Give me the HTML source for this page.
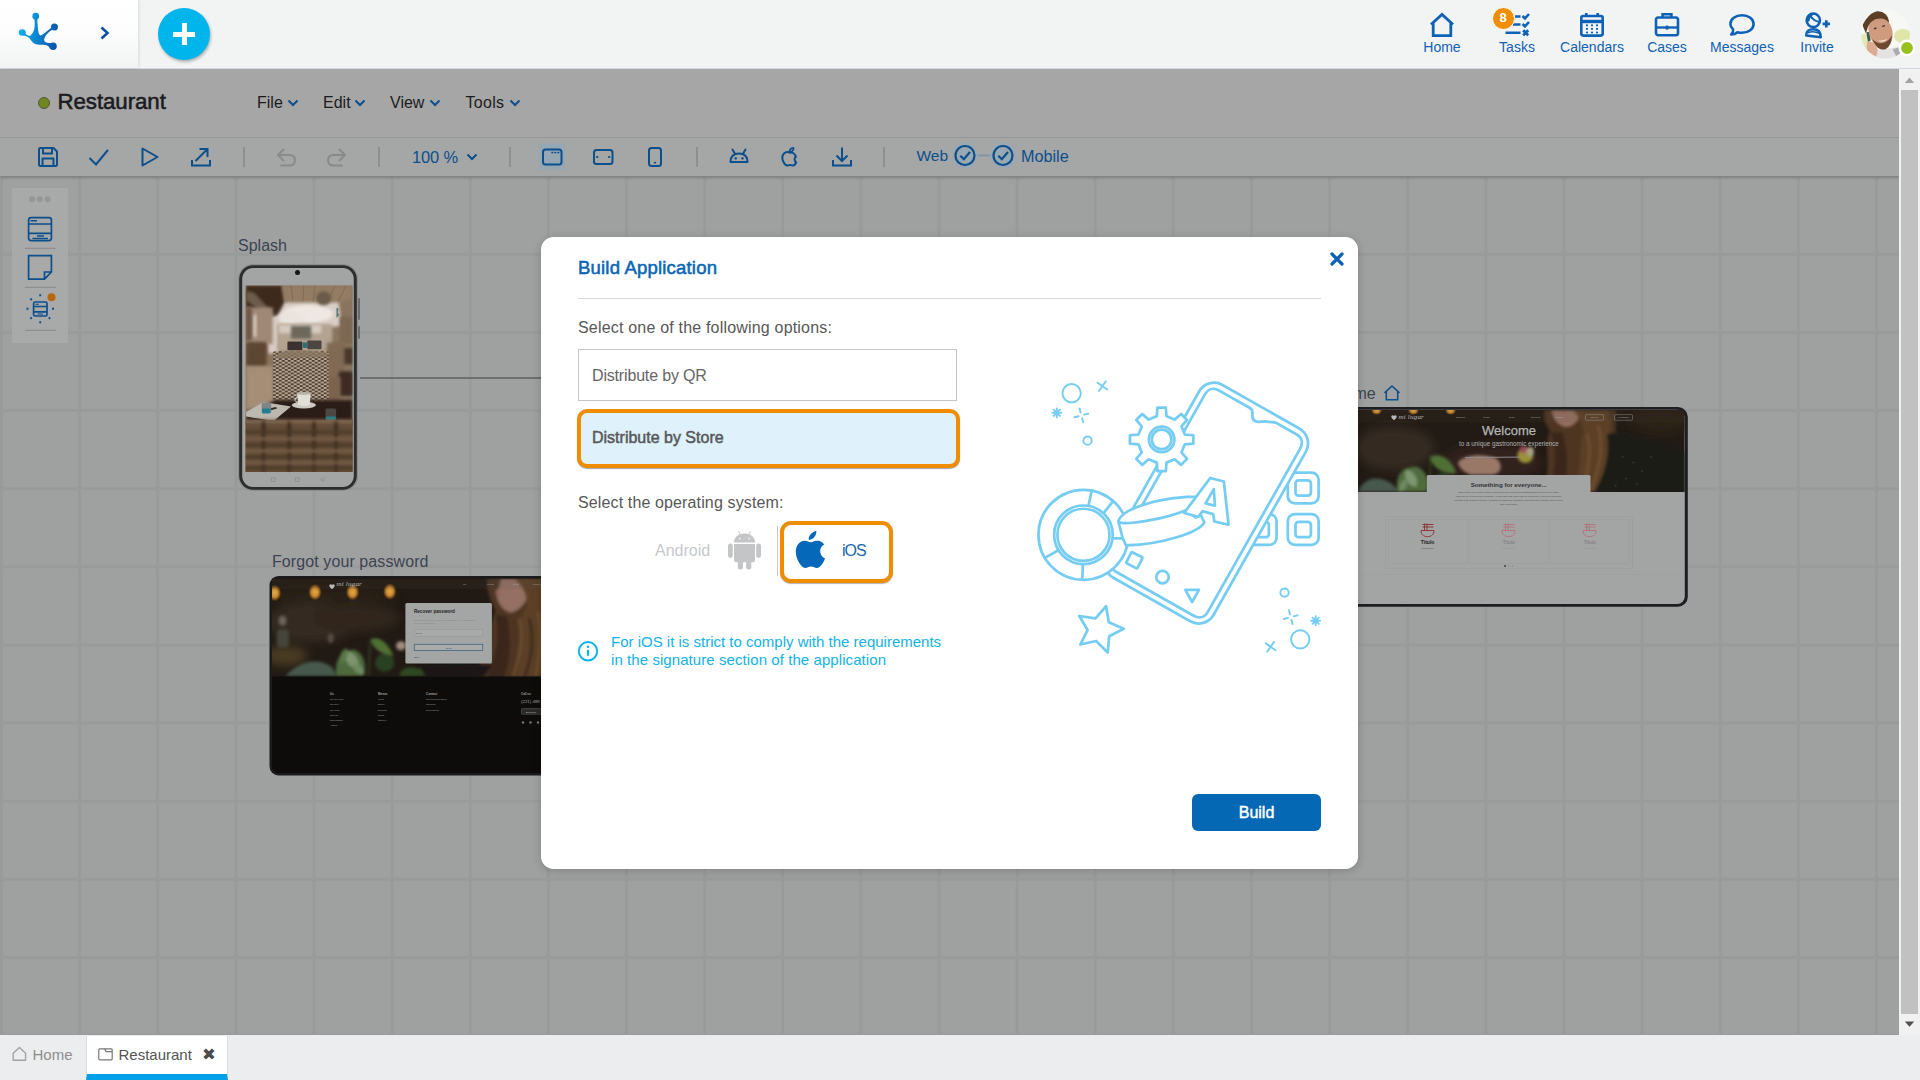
<!DOCTYPE html>
<html lang="en">
<head>
<meta charset="utf-8">
<title>Restaurant - Build Application</title>
<style>
*{box-sizing:border-box;margin:0;padding:0}
html,body{width:1920px;height:1080px;overflow:hidden;background:#9fa1a0;font-family:"Liberation Sans",sans-serif;}
body{position:relative}
.abs{position:absolute}
svg{display:block;overflow:visible}
/* ---------- top header ---------- */
#hdr{position:absolute;left:0;top:0;width:1920px;height:69px;background:#f2f4f4;border-bottom:1px solid #d2d9e0}
#logo{position:absolute;left:0;top:0;width:138px;height:68px;background:linear-gradient(180deg,#ffffff 0%,#fdfdfd 45%,#f1f3f3 100%);box-shadow:1px 0 3px rgba(0,0,0,.10)}
#plus{position:absolute;left:158px;top:8px;width:52px;height:52px;border-radius:50%;background:#00b4ec;box-shadow:1px 2px 3px rgba(0,0,0,.28)}
#plus:before{content:"";position:absolute;left:15px;top:23.5px;width:22px;height:5px;background:#fff}
#plus:after{content:"";position:absolute;left:23.5px;top:15px;width:5px;height:22px;background:#fff}
.nav{position:absolute;top:0;width:90px;height:68px;text-align:center;color:#1161b3;font-size:14px}
.nav span{position:absolute;left:0;width:90px;top:39px;line-height:16px}
.nav svg{position:absolute;left:31px;top:10px}
/* ---------- dimmed app area ---------- */
#title{position:absolute;left:0;top:69px;width:1899px;height:69px;background:#a6a6a6;border-bottom:1px solid #979797}
#tool{position:absolute;left:0;top:138px;width:1899px;height:38px;background:#a5a6a6;box-shadow:0 2px 3px rgba(0,0,0,.18)}
#canvas{position:absolute;left:0;top:176px;width:1899px;height:859px;background-color:#9fa1a0;overflow:hidden}
.menu{position:absolute;top:93px;font-size:16px;line-height:20px;color:#1c1c1c;white-space:nowrap}
.sep{position:absolute;top:147px;width:2px;height:20px;background:#8f8f8f}
.lbl{position:absolute;font-size:16px;line-height:20px;color:#3d4350;white-space:nowrap}
/* ---------- scrollbar ---------- */
#sb{position:absolute;left:1899px;top:69px;width:21px;height:966px;background:#f1f1f1}
#sb i{position:absolute;left:2px;top:21px;width:17px;height:924px;background:#c1c1c1}
/* ---------- bottom tabs ---------- */
#bot{position:absolute;left:0;top:1035px;width:1920px;height:45px;background:#ecedef}
/* ---------- modal ---------- */
.mt{font-size:16px;line-height:20px;color:#585858;white-space:nowrap}
#modal{position:absolute;left:541px;top:237px;width:817px;height:632px;background:#fff;border-radius:12.500px;box-shadow:0 2px 10px rgba(0,0,0,.18)}
</style>
</head>
<body>
<!--CANVAS-->
<div id="canvas">
<div class="abs" style="left:0;top:0;width:1899px;height:859px;background-image:linear-gradient(90deg,#999b9a 0,#999b9a 2.600px,transparent 3.100px),linear-gradient(180deg,#999b9a 0,#999b9a 2.600px,transparent 3.100px);background-size:78.125px 78.125px;background-position:0 -1.300px"></div>
<!-- palette -->
<div class="abs" style="left:12px;top:12px;width:56px;height:155px;background:#a8a9a9"></div>
<svg class="abs" style="left:12px;top:12px" width="56" height="155" viewBox="12 188 56 155" fill="none" stroke="#0b4f8c" stroke-width="1.700">
<g fill="#959696" stroke="none"><circle cx="32" cy="199.200" r="3"/><circle cx="39.800" cy="199.200" r="3"/><circle cx="47.600" cy="199.200" r="3"/></g>
<rect x="28.600" y="217.600" width="22.800" height="23" rx="2.500"/><path d="M28.600 224 H51.400 M28.600 233.400 H51.400"/><path d="M30.500 220.800 H37 M37 236 H44 M32.500 238.600 H48" stroke-width="1.500"/>
<path d="M25 248.400 H55.600 M25 287.400 H55.600 M25 330.400 H55.600" stroke="#8e8f8f" stroke-width="1.200"/>
<path d="M28.600 255.600 H51.400 V272 L44.500 279.200 H28.600 Z M51.400 272 H44.500 V279.200"/>
<rect x="33.600" y="302" width="13.400" height="14" rx="1.600"/><path d="M33.600 306.500 H47 M33.600 311.800 H47"/><path d="M35.500 304.300 H39 M37.500 314 H43" stroke-width="1.100"/>
<path d="M40.200 294.300 V296.300 M40.200 321.300 V323.300 M26.500 308.800 H28.500 M52 308.800 H54 M30.400 298.600 L31.800 300 M48.800 317.400 L50.200 318.800 M30.400 318.800 L31.800 317.400" stroke-width="1.900"/>
<circle cx="51.500" cy="297.300" r="4" fill="#b6690e" stroke="none"/>
</svg>
<!-- SPLASH -->
<div class="lbl" style="left:238px;top:60px">Splash</div>
<div class="abs" style="left:360px;top:200.500px;width:182px;height:2px;background:#6e6e6e"></div>
<svg class="abs" style="left:236px;top:87px" width="124" height="230" viewBox="236 263 124 230">
<defs><clipPath id="ph"><rect x="245.600" y="285.500" width="107" height="186.500"/></clipPath>
<filter id="b1" x="-30%" y="-30%" width="160%" height="160%"><feGaussianBlur stdDeviation="1.400"/></filter>
<filter id="b3" x="-30%" y="-30%" width="160%" height="160%"><feGaussianBlur stdDeviation="3.500"/></filter>
<pattern id="wk" width="6" height="3.600" patternUnits="userSpaceOnUse"><rect width="6" height="3.600" fill="#b8a793"/><path d="M0 .9 H2.600 M3 2.700 H5.600" stroke="#2d2117" stroke-width="1.300"/><path d="M2.800 0 V3.600 M5.800 0 V3.600" stroke="#6b5845" stroke-width=".5"/></pattern>
<pattern id="wk2" width="9" height="7" patternUnits="userSpaceOnUse"><rect width="9" height="7" fill="#6b543d"/><rect x="0" y="0" width="4.500" height="3.500" fill="#4c3826"/><rect x="4.500" y="3.500" width="4.500" height="3.500" fill="#4a3624"/></pattern>
</defs>
<rect x="358" y="298" width="2" height="22" rx="1" fill="#6a6c6c"/><rect x="358" y="326" width="2" height="13" rx="1" fill="#6a6c6c"/>
<rect x="238" y="264" width="120" height="227" rx="15" fill="#8c8e8e"/>
<rect x="239.200" y="265.200" width="117.600" height="224.600" rx="14" fill="#2c2c2c"/>
<rect x="242.200" y="268" width="111.600" height="219" rx="11" fill="#a3a5a5"/>
<circle cx="297.500" cy="272.600" r="2.500" fill="#141414"/>
<!--PH--><g clip-path="url(#ph)">
<rect x="245" y="285" width="108" height="188" fill="#8a745e"/>
<!-- ceiling -->
<path d="M246.1 285.5 H281.9 L286.4 313.9 L275.4 318.5 L246.1 307.5 Z" fill="#3d2b1f" filter="url(#b1)"/>
<path d="M281.9 285.5 H352.5 V299.3 L338.7 302.9 L284.6 302.0 Z" fill="#937c64" filter="url(#b1)"/>
<path d="M291.0 285.5 L292.9 301.1 M303.9 285.5 L302.9 301.6 M314.9 285.5 L313.0 301.6 M335.0 285.5 L327.7 301.6 M346.1 285.5 L337.8 302.0" stroke="#7b6650" stroke-width=".8" fill="none"/>
<path d="M246.1 291.0 L254.3 292.8 L275.4 315.8 L270.8 319.4 L246.1 300.2 Z" fill="#6d5b4b" filter="url(#b1)"/>
<!-- bright window zone -->
<g filter="url(#b1)"><path d="M284.6 302.4 H338.7 L341.5 325.9 L322.2 328.1 L280.0 326.8 L277.3 342.4 L268.1 343.3 L268.6 321.3 L277.3 315.8 Z" fill="#d9cec6"/>
<ellipse cx="307.5" cy="313.9" rx="25.7" ry="8.8" fill="#eee7e3"/><ellipse cx="291.0" cy="317.6" rx="14.7" ry="6.6" fill="#ebe3de"/></g>
<ellipse cx="323.7" cy="298.3" rx="7.3" ry="7.0" fill="#6b5a48" filter="url(#b1)"/>
<path d="M267.2 316.7 H279.1 V353.4 H268.1 Z" fill="#d8ccc4" filter="url(#b1)"/>
<!-- left wall -->
<rect x="246.1" y="307.5" width="26.6" height="36.7" fill="#a08876" filter="url(#b1)"/>
<rect x="253.4" y="314.8" width="2.9" height="22.0" fill="#ddd3cb" filter="url(#b1)"/>
<rect x="246.1" y="307.5" width="5.5" height="33.0" fill="#6a5443" filter="url(#b1)"/>
<!-- mid furniture -->
<rect x="277.3" y="324.0" width="55.0" height="27.5" fill="#b3a391" filter="url(#b1)"/>
<rect x="279.1" y="324.9" width="42.2" height="8.3" fill="#d6cbc0" filter="url(#b1)"/>
<rect x="291.0" y="325.9" width="20.2" height="12.8" fill="#6d675c" filter="url(#b1)"/>
<rect x="287.4" y="341.4" width="15.0" height="8.8" rx="1" fill="#3b3230"/>
<rect x="307.2" y="340.5" width="14.3" height="8.8" rx="1" fill="#4d4542"/>
<rect x="302.9" y="342.4" width="4.0" height="5.5" fill="#2a6c78"/>
<path d="M336.5 307.5 l2 1.500 l-.800 3.500 l1.400 2.500 l-2.600 3 Z" fill="#4c7567"/>
<rect x="339.6" y="316.7" width="12.8" height="27.5" fill="#7d6853" filter="url(#b1)"/>
<!-- left armchair -->
<rect x="246.1" y="342.0" width="20.5" height="24.2" rx="2" fill="#5d4633" filter="url(#b1)"/>
<!-- right wicker chair and stool -->
<rect x="326.8" y="342.4" width="17.4" height="35.8" rx="2" fill="#806a52" filter="url(#b1)"/>
<rect x="338.7" y="371.3" width="14.3" height="24.8" rx="2" fill="#3c2c22" filter="url(#b1)"/>
<rect x="344.2" y="347.9" width="8.8" height="16.5" fill="#4a382b" filter="url(#b1)"/>
<!-- floor -->
<path d="M246.1 366.2 H273.6 V408.4 H246.1 Z" fill="#a58d76" filter="url(#b1)"/>
<path d="M327.7 377.2 H340.5 V401.1 H327.7 Z" fill="#7a634d" filter="url(#b1)"/>
<!-- center wicker chair -->
<rect x="272.7" y="351.2" width="55.9" height="49.2" rx="2.5" fill="url(#wk)"/>
<path d="M281.9 351.9 Q300.2 347.9 325.9 352.6 L327.7 357.0 L273.6 358.0 Z" fill="#8b7862" opacity=".75"/>
<!-- table -->
<path d="M246.1 414.8 L275.4 400.1 L352.5 400.1 V424.9 H246.1 Z" fill="#2a1d17" filter="url(#b1)"/>
<path d="M246.1 412.1 L263.5 402.0 L291.0 406.6 L273.6 420.9 L246.1 416.6 Z" fill="#bdb8b0"/>
<path d="M269.0 408.4 l7 -1.400 l1 1.600 l-7 2 Z" fill="#2e2a28"/>
<rect x="261.7" y="402.5" width="9.5" height="10.6" rx="1.500" fill="#7f8584"/><rect x="262.0" y="408.4" width="8.4" height="5.1" rx="1" fill="#1f7f90"/>
<ellipse cx="303.9" cy="405.1" rx="12.1" ry="3.5" fill="#cfc9c1"/>
<path d="M296.9 393.0 H310.8 L309.7 404.7 Q303.9 407.5 298.4 404.7 Z" fill="#e2ded8"/>
<ellipse cx="303.9" cy="393.4" rx="7.0" ry="1.5" fill="#bab3aa"/>
<path d="M297.4 397.4 q-3 .500 -2.400 3 q.600 2 3 1.600" fill="none" stroke="#e2ded8" stroke-width="1"/>
<rect x="325.5" y="408.4" width="10.6" height="11.4" rx="1.500" fill="#4b4843"/><rect x="325.9" y="416.6" width="9.9" height="4.8" rx="1" fill="#1f7f90"/>
<!-- bottom woven (blurred) -->
<rect x="244" y="420.3" width="110" height="56" fill="#634b37"/>
<g filter="url(#b1)">
<rect x="244" y="419.4" width="110" height="4" fill="#7d6650"/>
<path d="M263.5 421.2 V471.7 M289.2 421.2 V471.7 M314.0 421.2 V471.7 M336.0 421.2 V471.7" stroke="#3c2b1e" stroke-width="3.600" fill="none"/>
<path d="M244 432.2 H354 M244 445.1 H354 M244 457.0 H354 M244 468.0 H354" stroke="#4a3727" stroke-width="2.800" fill="none"/>
<path d="M244 438.7 H354 M244 450.9 H354 M244 462.5 H354" stroke="#7b644c" stroke-width="2" fill="none"/>
</g>
</g><!--/PH-->
<g fill="none" stroke="#8d8f8f" stroke-width=".8"><rect x="271.500" y="478" width="4" height="3.400"/><rect x="295.500" y="478" width="4" height="3.400"/><path d="M324 477.800 L320.500 479.700 L324 481.600 Z"/></g>
</svg>
<div class="lbl" style="left:272px;top:376px;letter-spacing:.09px">Forgot your password</div>
<svg class="abs" style="left:268px;top:399px" width="290" height="202" viewBox="268 575 290 202" font-family="'Liberation Sans',sans-serif">
<defs><clipPath id="fp"><rect x="272" y="578.500" width="290" height="98"/></clipPath>
<filter id="b2" x="-40%" y="-40%" width="180%" height="180%"><feGaussianBlur stdDeviation="2.200"/></filter>
<filter id="b5" x="-40%" y="-40%" width="180%" height="180%"><feGaussianBlur stdDeviation="5"/></filter>
<radialGradient id="lamp"><stop offset="0" stop-color="#e0aa4c"/><stop offset=".5" stop-color="#c88a2e"/><stop offset=".8" stop-color="#8a5518" stop-opacity=".7"/><stop offset="1" stop-color="#5a3512" stop-opacity="0"/></radialGradient>
</defs>
<rect x="269.500" y="576" width="300" height="199.500" rx="9" fill="#1b1b1d"/>
<rect x="272" y="578.500" width="295" height="194.500" rx="6.500" fill="#0e0c0a"/>
<!--FP--><g clip-path="url(#fp)">
<rect x="272" y="578" width="290" height="99" fill="#211a14"/>
<g filter="url(#b5)">
<ellipse cx="311.8" cy="622.1" rx="46" ry="20" fill="#362b21"/>
<ellipse cx="355.5" cy="617.8" rx="44" ry="14" fill="#30261c"/>
<ellipse cx="329.3" cy="595.9" rx="70" ry="6" fill="#2a2018"/>
<ellipse cx="285.5" cy="655.7" rx="22" ry="10" fill="#4a3a22"/>
<ellipse cx="457.6" cy="668.8" rx="40" ry="8" fill="#19130f"/>
</g>
<g filter="url(#b1)">
<ellipse cx="282.6" cy="620.7" rx="4" ry="5" fill="#6a6558"/>
<rect x="276.8" y="629.4" width="12" height="18" rx="4" fill="#45443a"/>
<ellipse cx="330.7" cy="638.2" rx="3" ry="5" fill="#5a4c44"/>
</g>
<!-- plants -->
<g filter="url(#b1)">
<path d="M285.5 676.1 C297.2 663.0 316.1 655.7 332.2 667.3 L336.5 676.1 Z" fill="#46594e"/>
<path d="M336.5 676.1 C333.6 661.5 340.9 649.8 354.0 649.8 C364.3 652.8 367.2 667.3 362.8 676.1 Z" fill="#4d6a3c"/>
<path transform="translate(351.9 660.0) rotate(-35)" d="M0 -11.0 C7.0 -5.5 7.0 5.5 0 11.0 C-7.0 5.5 -7.0 -5.5 0 -11.0Z" fill="#7d9470"/>
<path transform="translate(343.8 655.7) rotate(20)" d="M0 -8.0 C4.5 -4.0 4.5 4.0 0 8.0 C-4.5 4.0 -4.5 -4.0 0 -8.0Z" fill="#587a45"/>
<path transform="translate(358.4 668.8) rotate(-50)" d="M0 -8.0 C5.0 -4.0 5.0 4.0 0 8.0 C-5.0 4.0 -5.0 -4.0 0 -8.0Z" fill="#6f8a62"/>
<path d="M370.1 639.6 C378.8 635.3 387.6 642.5 393.4 655.7 C384.7 655.7 373.0 649.8 370.1 639.6Z" fill="#4f7036"/>
<path d="M368.6 676.1 L370.1 642.5" stroke="#3f5a2a" stroke-width="1" fill="none"/>
<ellipse cx="384.7" cy="662.7" rx="9.500" ry="9" fill="#2b4021"/>
<path d="M399.3 676.1 C400.7 667.3 412.4 664.4 422.6 670.3 L425.5 676.1 Z" fill="#2f4a24"/>
</g>
<!-- woman -->
<g filter="url(#b1)">
<path d="M486.8 578.4 H545.1 V676.8 H472.2 C489.7 655.7 486.8 629.4 495.5 610.5 C489.7 600.3 486.8 588.6 486.8 578.4Z" fill="#4d3522"/>
<path d="M495.5 578.4 H530.5 C532.0 595.9 521.8 611.2 510.1 612.6 C501.3 609.0 497.7 603.2 496.2 593.0 Z" fill="#937062"/><path d="M492.6 578.4 H501.3 L498.4 590.0 L493.3 588.6 Z" fill="#4a3528"/>
<path d="M514.5 578.4 H545.1 V676.8 H515.9 C524.7 646.9 515.9 625.0 524.7 610.5 C530.5 595.9 521.8 585.7 514.5 578.4Z" fill="#5c3f27"/>
<path d="M495.5 614.8 C501.3 635.3 495.5 655.7 486.8 676.8 H504.3 C513.0 655.7 510.1 632.3 507.2 616.3Z" fill="#3a281b"/>
<path d="M529.0 617.8 C534.9 639.6 530.5 661.5 524.7 676.8" stroke="#33221a" stroke-width="2.200" fill="none"/><path d="M518.8 617.8 C524.7 636.7 518.8 658.6 513.0 676.8 M537.8 611.9 C542.2 632.3 539.3 655.7 536.3 676.8" stroke="#7a5836" stroke-width="1.600" fill="none"/>
<path d="M495.5 594.4 q3 -2 6 -.5 q-2 3 -6 .5Z" fill="#9c5560"/>
<path d="M425.5 664.4 H492.6 L483.8 676.8 H425.5 Z" fill="#1b1715"/>
<ellipse cx="401.0" cy="645.8" rx="5" ry="4.500" fill="#a18a7c"/>
</g>
<ellipse cx="274.6" cy="593" rx="6.875" ry="8.4" fill="url(#lamp)"/><ellipse cx="315" cy="592.2" rx="6.875" ry="8.4" fill="url(#lamp)"/><ellipse cx="352.6" cy="592.2" rx="6.875" ry="8.4" fill="url(#lamp)"/><ellipse cx="389.8" cy="591.5" rx="6.875" ry="8.4" fill="url(#lamp)"/>
<rect x="272" y="578.500" width="290" height="10.600" fill="#5a5048" opacity=".12"/>
</g><!--/FP-->
<rect x="405.400" y="603" width="86.500" height="60.500" rx="1.500" fill="#a4a6a6"/>
<text x="414" y="612.800" font-size="4.600" font-weight="bold" fill="#222">Recover password</text>
<text x="414" y="620.500" font-size="2.300" fill="#7c7e7e">Ingresa tu dirección de correo electrónico y te enviaremos a</text>
<text x="414" y="623.700" font-size="2.300" fill="#7c7e7e">tu nueva contraseña.</text>
<rect x="414.200" y="629.800" width="68.600" height="6.400" fill="#a9abab" stroke="#8a9599" stroke-width=".5"/><text x="415.800" y="634.200" font-size="2.400" fill="#555">Email</text>
<rect x="414.200" y="644.200" width="68.600" height="6.400" fill="#a9abab" stroke="#1f4f73" stroke-width=".6"/><text x="448.500" y="648.500" font-size="2.400" fill="#1f4f73" text-anchor="middle">Send</text>
<text x="414" y="658.400" font-size="2.400" fill="#1f4f73">Back</text>
<path d="M332 585 c-.9-1.600 -3.200-.6 -2.600 1.300 c.3 1 1.500 2 2.600 2.900 c1.100-.9 2.300-1.900 2.600-2.900 c.6-1.900 -1.700-2.900 -2.600-1.300z" fill="#b9b9b9"/>
<text x="336.500" y="586.400" font-size="7" font-style="italic" fill="#b9b9b9" font-family="'Liberation Serif',serif" letter-spacing=".2">mi lugar</text>
<g font-size="2.300" fill="#a8a8a8"><text x="463" y="585">Us</text><text x="487" y="585">Menus</text><text x="513" y="585">News</text><text x="533" y="585">Reservations</text></g>
<g fill="#a2a2a2" font-size="2.200">
<text x="330" y="694.500" font-size="3" font-weight="bold">Us</text><text x="330" y="700">The brief chef</text><text x="330" y="705.300">Our story</text><text x="330" y="710.500">The team</text><text x="330" y="715.700">Careers</text><text x="330" y="720.900">Scholarships</text><text x="330" y="726.100">Awards</text>
<text x="378" y="694.500" font-size="3" font-weight="bold">Menus</text><text x="378" y="700">Lunch</text><text x="378" y="705.300">Dinner</text><text x="378" y="710.500">Desserts</text><text x="378" y="715.700">Drinks</text><text x="378" y="720.900">Children</text>
<text x="426" y="694.500" font-size="3" font-weight="bold">Contact</text><text x="426" y="700">Special Reservations</text><text x="426" y="705.300">Gift cards</text><text x="426" y="710.500">Reservations</text>
<text x="521" y="694.500" font-size="3" font-weight="bold">Call us</text><text x="521" y="702.500" font-size="4.400">(221) 489</text>
<rect x="521.500" y="708.500" width="22" height="5.800" rx=".8" fill="#2a2a2a" stroke="#777" stroke-width=".4"/><text x="526" y="712.600" font-size="2.200" fill="#c8c8c8">Book now!</text>
<circle cx="523" cy="722.500" r="1.200" fill="#777"/><circle cx="530.500" cy="722.500" r="1.200" fill="#777"/><circle cx="538" cy="722.500" r="1.200" fill="#777"/>
</g>
</svg>
<div class="lbl" style="left:1333px;top:208px">Home</div>
<svg class="abs" style="left:1383px;top:208px" width="18" height="18" viewBox="0 0 18 18" fill="none" stroke="#0b4f8c" stroke-width="1.600"><path d="M1.500 8.800 L9 2 L16.500 8.800 M3.300 7.500 V15.800 H14.700 V7.500"/></svg>
<svg class="abs" style="left:1340px;top:230px" width="350" height="204" viewBox="1340 406 350 204" font-family="'Liberation Sans',sans-serif">
<defs><clipPath id="hp"><rect x="1340" y="410" width="344.500" height="82"/></clipPath></defs>
<rect x="1330" y="407" width="357.800" height="199.800" rx="10" fill="#1e1e22"/>
<rect x="1330" y="409.800" width="354.800" height="194.200" rx="7.500" fill="#a3a4a4"/>
<!--HP--><g clip-path="url(#hp)">
<rect x="1340" y="410" width="345" height="82" fill="#221b15"/>
<g filter="url(#b5)">
<ellipse cx="1394.3" cy="448.3" rx="40" ry="22" fill="#352a20"/>
<ellipse cx="1491.7" cy="462.4" rx="50" ry="18" fill="#30241a"/>
<ellipse cx="1659.9" cy="421.7" rx="30" ry="12" fill="#2c2016"/>
</g>
<g filter="url(#b1)">
<path d="M1358.0 491.7 C1364.2 474.8 1385.4 473.1 1399.6 491.7 Z" fill="#46594e"/>
<path d="M1397.8 491.7 C1394.3 474.8 1403.1 466.0 1417.3 466.9 C1427.9 471.3 1429.7 483.7 1426.1 491.7 Z" fill="#4f6c3e"/>
<path transform="translate(1411.1 478.4) rotate(-30)" d="M0 -10.0 C6.5 -5.0 6.5 5.0 0 10.0 C-6.5 5.0 -6.5 -5.0 0 -10.0Z" fill="#7f9672"/>
<path transform="translate(1403.1 485.5) rotate(25)" d="M0 -7.0 C4.5 -3.5 4.5 3.5 0 7.0 C-4.5 3.5 -4.5 -3.5 0 -7.0Z" fill="#6f8a62"/>
<path d="M1429.7 457.1 C1440.3 451.8 1450.9 458.9 1456.3 473.1 C1445.6 474.8 1433.2 469.5 1429.7 457.1Z" fill="#4f7036"/>
<path d="M1428.8 491.7 L1430.6 458.9" stroke="#3f5a2a" stroke-width="1" fill="none"/>
<ellipse cx="1442.1" cy="481.9" rx="10" ry="9" fill="#2b4021"/>
<!-- woman -->
<path d="M1544.8 410.2 H1615.6 V491.7 H1541.3 C1553.6 471.3 1543.0 448.3 1550.1 430.6 C1544.8 423.5 1543.0 416.4 1544.8 410.2Z" fill="#4d3522"/>
<path d="M1551.9 410.2 H1580.2 C1580.2 419.9 1573.1 427.0 1565.2 426.7 C1557.2 424.4 1552.8 418.2 1551.9 410.2Z" fill="#957060"/>
<path d="M1560.7 411.4 q3.500 -1 6 .5 q-3 2.500 -6 -.5Z" fill="#9c5560"/>
<path d="M1573.1 410.2 H1608.5 C1615.6 439.4 1605.0 474.8 1597.9 491.7 H1571.4 C1583.8 471.3 1578.4 450.0 1583.8 432.3 C1582.0 421.7 1578.4 416.4 1573.1 410.2Z" fill="#5c3f27"/>
<path d="M1550.1 432.3 C1559.0 453.6 1553.6 474.8 1548.3 491.7 H1562.5 C1569.6 471.3 1567.8 450.0 1562.5 432.3Z" fill="#3a281b"/>
<path d="M1587.3 434.1 C1592.6 453.6 1587.3 474.8 1580.2 491.7 M1597.9 425.3 C1605.0 448.3 1597.9 471.3 1590.8 491.7" stroke="#7a5836" stroke-width="1.600" fill="none"/><path d="M1606.8 434.1 C1626.3 428.8 1661.7 439.4 1685.6 453.6 V491.7 H1594.4 C1605.0 474.8 1610.3 453.6 1606.8 434.1Z" fill="#1d1a19"/>
<!-- hand, fork, food -->
<path d="M1458.0 462.4 C1463.3 454.5 1484.6 452.7 1497.0 458.9 C1504.1 466.0 1500.5 473.9 1491.7 474.8 H1470.4 C1463.3 471.3 1458.9 467.8 1458.0 462.4Z" fill="#9a7868"/>
<ellipse cx="1525.3" cy="455.4" rx="8" ry="7.500" fill="#9a9238"/><ellipse cx="1523.5" cy="449.7" rx="3.600" ry="3.600" fill="#a04a5c"/><ellipse cx="1530.3" cy="451.5" rx="3.600" ry="4.500" fill="#a8a388"/>
</g>
<path d="M1465.1 457.5 L1520.0 457.1" stroke="#8d8d92" stroke-width="1"/>
<g fill="#5a4a40" opacity=".5"><circle cx="1633.3" cy="462.4" r="1"/><circle cx="1642.2" cy="471.3" r="1"/><circle cx="1626.3" cy="478.4" r="1"/><circle cx="1651.0" cy="457.1" r="1"/><circle cx="1636.9" cy="483.7" r="1"/><circle cx="1622.7" cy="457.1" r="1"/><circle cx="1615.6" cy="485.5" r="1"/></g>
<ellipse cx="1376.600" cy="410.500" rx="5.600" ry="4.600" fill="url(#lamp)"/><ellipse cx="1413.400" cy="410.500" rx="5.600" ry="4.600" fill="url(#lamp)"/><ellipse cx="1450.600" cy="410.500" rx="5.600" ry="4.600" fill="url(#lamp)"/>
<rect x="1340" y="410" width="345" height="12.500" fill="#5a5048" opacity=".1"/>
</g><!--/HP-->
<path d="M1394 416 c-.9-1.600 -3.200-.6 -2.600 1.300 c.3 1 1.500 2 2.600 2.900 c1.100-.9 2.300-1.900 2.600-2.900 c.6-1.900 -1.700-2.900 -2.600-1.300z" fill="#b9b9b9"/>
<text x="1398.500" y="419" font-size="7" font-style="italic" fill="#b9b9b9" font-family="'Liberation Serif',serif" letter-spacing=".2">mi lugar</text>
<g font-size="2.200" fill="#aaa"><text x="1456" y="418.400">Nosotros</text><text x="1483" y="418.400">Menús</text><text x="1509" y="418.400">News</text><text x="1531" y="418.400">Reservas</text><text x="1555" y="418.400">Contacto</text>
<rect x="1585.500" y="414.600" width="18" height="5.600" rx=".6" fill="none" stroke="#aaa" stroke-width=".4"/><text x="1594.500" y="418.400" text-anchor="middle">Ingresar</text><rect x="1614.500" y="414.600" width="18" height="5.600" rx=".6" fill="none" stroke="#aaa" stroke-width=".4"/><text x="1623.500" y="418.400" text-anchor="middle">Registrarse</text></g>
<text x="1509" y="435.400" font-size="13" fill="#b5b5b5" text-anchor="middle" stroke="#b5b5b5" stroke-width=".25">Welcome</text>
<text x="1509" y="445.600" font-size="6.300" fill="#b0b0b0" text-anchor="middle">to a unique gastronomic experience</text>
<rect x="1426.800" y="475" width="163.700" height="31" rx="1.500" fill="#a3a4a4"/>
<text x="1508.700" y="486.500" font-size="6.200" font-weight="bold" fill="#333" text-anchor="middle">Something for everyone...</text>
<g font-size="2.500" fill="#4c4c4c" text-anchor="middle"><text x="1508.700" y="493.400">Bienvenido a Mi Lugar, donde ofrecemos una experiencia gastronómica única con el sabor</text><text x="1508.700" y="497.200">especial de la cocina del noroeste. Ya sea que esté aquí para un almuerzo o cena de negocios,</text><text x="1508.700" y="501">celebrar una ocasión especial o buscar un ambiente romántico para una cita, nuestro menú ofrece</text><text x="1508.700" y="504.800">algo para todos.</text></g>
<rect x="1385.200" y="516.800" width="247.400" height="51.600" fill="none" stroke="#9a9b9b" stroke-width=".6"/>
<g fill="none" stroke="#9a9b9b" stroke-width=".5"><rect x="1388.400" y="519.300" width="79" height="44"/><rect x="1469.600" y="519.300" width="79" height="44"/><rect x="1550.600" y="519.300" width="79" height="44"/></g>
<g fill="none" stroke-width=".9"><g stroke="#8c2f37"><path d="M1421 530.500 H1434 M1422.500 524.500 H1433.500 M1422.500 527 H1433.500 M1424.500 523.500 V530.500 M1427 523.500 V530.500 M1421 530.500 C1421 534.500 1423.500 536.600 1427.500 536.600 C1431.500 536.600 1434 534.500 1434 530.500"/></g>
<g stroke="#b0727a"><path d="M1502 530.500 H1515 M1503.500 524.500 H1514.500 M1503.500 527 H1514.500 M1505.500 523.500 V530.500 M1508 523.500 V530.500 M1502 530.500 C1502 534.500 1504.500 536.600 1508.500 536.600 C1512.500 536.600 1515 534.500 1515 530.500"/>
<path d="M1583 530.500 H1596 M1584.500 524.500 H1595.500 M1584.500 527 H1595.500 M1586.500 523.500 V530.500 M1589 523.500 V530.500 M1583 530.500 C1583 534.500 1585.500 536.600 1589.500 536.600 C1593.500 536.600 1596 534.500 1596 530.500"/></g></g>
<text x="1427.600" y="544.200" font-size="5" font-weight="bold" fill="#222" text-anchor="middle">Titulo</text><text x="1427.600" y="548.600" font-size="2.300" fill="#444" text-anchor="middle">Descripción</text>
<text x="1508.700" y="544.200" font-size="5" fill="#777" text-anchor="middle">Titulo</text><text x="1508.700" y="548.600" font-size="2.300" fill="#8b8b8b" text-anchor="middle">Descripción</text>
<text x="1589.800" y="544.200" font-size="5" fill="#777" text-anchor="middle">Titulo</text><text x="1589.800" y="548.600" font-size="2.300" fill="#8b8b8b" text-anchor="middle">Descripción</text>
<circle cx="1505" cy="566" r=".9" fill="#333"/><circle cx="1508.700" cy="566" r=".7" fill="#8a8a8a"/><circle cx="1512.400" cy="566" r=".7" fill="#8a8a8a"/>
<path d="M1340 574.600 H1684" stroke="#9c9d9d" stroke-width=".6"/>
</svg>
</div>
<!--TITLE-->
<div id="title"></div>
<i class="abs" style="left:38px;top:97px;width:12px;height:12px;border-radius:50%;background:#70861f;border:1px solid #555b45"></i>
<div class="abs" style="left:57.500px;top:88px;font-size:22.300px;line-height:28px;color:#1c1c1e;-webkit-text-stroke:.55px #1c1c1e;letter-spacing:-.08px;white-space:nowrap">Restaurant</div>
<div class="menu" style="left:257px">File</div><svg class="abs" style="left:287px;top:99px" width="12" height="8" viewBox="0 0 12 8" fill="none" stroke="#0b4f8c" stroke-width="2"><path d="M1.5 1.5 L6 6 L10.5 1.5"/></svg>
<div class="menu" style="left:323px">Edit</div><svg class="abs" style="left:354px;top:99px" width="12" height="8" viewBox="0 0 12 8" fill="none" stroke="#0b4f8c" stroke-width="2"><path d="M1.5 1.5 L6 6 L10.5 1.5"/></svg>
<div class="menu" style="left:390px">View</div><svg class="abs" style="left:429px;top:99px" width="12" height="8" viewBox="0 0 12 8" fill="none" stroke="#0b4f8c" stroke-width="2"><path d="M1.5 1.5 L6 6 L10.5 1.5"/></svg>
<div class="menu" style="left:465.500px;letter-spacing:.3px">Tools</div><svg class="abs" style="left:509px;top:99px" width="12" height="8" viewBox="0 0 12 8" fill="none" stroke="#0b4f8c" stroke-width="2"><path d="M1.5 1.5 L6 6 L10.5 1.5"/></svg>
<div id="tool"></div>
<svg class="abs" style="left:0;top:138px" width="1100" height="38" viewBox="0 138 1100 38" fill="none" stroke="#0b4f8c" stroke-width="2" stroke-linejoin="round" stroke-linecap="round">
<!-- save -->
<path d="M39 149.5 Q39 148 40.5 148 H53.5 L57 151.5 V164.5 Q57 166 55.5 166 H40.5 Q39 166 39 164.5 Z"/><path d="M43 148 V153.4 H52 V148 M42.5 166 V158.4 H53.5 V166" stroke-linecap="butt"/>
<!-- check -->
<path d="M90 158.5 L96 164.5 L107.5 150.5" stroke-linejoin="miter"/>
<!-- play -->
<path d="M142.5 148.5 V165.5 L157.5 157 Z"/>
<!-- export -->
<path d="M192 160 V165.5 H210 V160 M195.5 161 L207 149.5 M199.5 149 H207.5 V157" stroke-linejoin="miter" stroke-linecap="butt"/>
<!-- undo / redo -->
<g stroke="#8a8a8a"><path d="M283.5 149.5 L278 155 L283.5 160.5 M278.5 155 H289 Q295 155 295 160.2 Q295 165.5 289 165.5 H281"/>
<path d="M339.500 149.5 L345 155 L339.500 160.5 M344.500 155 H334 Q328 155 328 160.2 Q328 165.5 334 165.5 H342"/></g>
<!-- device web (selected) -->
<rect x="539" y="143.5" width="26" height="26" rx="3" fill="#94a7b3" stroke="none"/>
<rect x="543" y="149.5" width="18.500" height="15" rx="2.500"/><path d="M552 152.600 h.6 M555 152.600 h.6 M558 152.600 h.6" stroke-width="1.600"/>
<!-- tablet -->
<rect x="594" y="150" width="18.500" height="14" rx="2.500"/><path d="M597 157 h.4 M609 157 h.4" stroke-width="2"/>
<!-- phone -->
<rect x="649" y="148" width="12" height="18" rx="2.500"/><path d="M654.700 162.600 h.6" stroke-width="1.800"/>
<!-- android -->
<path d="M730.500 162 Q730.500 153.500 739 153.500 Q747.500 153.500 747.500 162 Z"/><path d="M732.500 149.500 L735 153.800 M745.500 149.500 L743 153.800"/><path d="M735.500 158.400 h.4 M742.300 158.400 h.4" stroke-width="2.200"/>
<!-- apple -->
<path d="M790 152.800 C788 151.800 785.500 152 784 153.500 C782 155.500 782 159 783.500 162 C784.800 164.600 786.400 166 788 165.400 C789.400 164.900 790.600 164.900 792 165.400 C793.600 166 795.200 164.600 796.300 162.300 C794.300 161.300 793.800 158.300 796 156.600 C794.800 154 792.200 152 790 152.800 Z"/><path d="M789.500 152.200 C789.500 149.500 791 148 793.500 147.800 C793.800 150 792.300 152 789.500 152.200 Z" stroke-width="1.700"/>
<!-- download -->
<path d="M833 160 V165.500 H851 V160 M842 147.500 V160.500 M836.500 155.500 L842 161 L847.500 155.500" stroke-linejoin="miter" stroke-linecap="butt"/>
<!-- web/mobile toggles -->
<path d="M975 155.500 H993" stroke="#7893a6" stroke-width="1.500"/>
<circle cx="965" cy="155.500" r="13" fill="#9aa8b2" stroke="none"/><circle cx="1003" cy="155.500" r="13" fill="#9aa8b2" stroke="none"/>
<circle cx="965" cy="155.500" r="9.500" stroke-width="2.200"/><circle cx="1003" cy="155.500" r="9.500" stroke-width="2.200"/>
<path d="M960.300 155.800 L963.800 159.200 L970 152" stroke-width="2.200" stroke-linejoin="miter" stroke-linecap="butt"/><path d="M998.300 155.800 L1001.800 159.200 L1008 152" stroke-width="2.200" stroke-linejoin="miter" stroke-linecap="butt"/>
</svg>
<i class="sep" style="left:243px"></i><i class="sep" style="left:378px"></i><i class="sep" style="left:509px"></i><i class="sep" style="left:696px"></i><i class="sep" style="left:883px"></i>
<div class="abs" style="left:412px;top:147px;font-size:16.5px;letter-spacing:-.15px;line-height:20px;color:#0b4f8c;white-space:nowrap">100 %</div><svg class="abs" style="left:466px;top:153px" width="12" height="8" viewBox="0 0 12 8" fill="none" stroke="#0b4f8c" stroke-width="2"><path d="M1.5 1.5 L6 6 L10.5 1.5"/></svg>
<div class="abs" style="left:916.500px;top:146px;font-size:15.500px;line-height:20px;color:#0b4f8c;white-space:nowrap">Web</div>
<div class="abs" style="left:1021px;top:146px;font-size:16.200px;line-height:20px;color:#0b4f8c;white-space:nowrap">Mobile</div>

<!--HEADER-->
<div id="hdr"><div id="logo">
<svg class="abs" style="left:0;top:0" width="138" height="68" viewBox="0 0 138 68">
<defs><linearGradient id="lg" gradientUnits="userSpaceOnUse" x1="170" y1="500" x2="940" y2="620"><stop offset="0" stop-color="#0fb0ee"/><stop offset=".45" stop-color="#0887d3"/><stop offset="1" stop-color="#0a52a8"/></linearGradient></defs>
<g transform="translate(10 5) scale(.05094)" fill="url(#lg)">
<path d="M478 270 C500 400 482 540 402 598 C352 612 320 584 292 556 L262 598 C330 600 380 640 420 700 C470 770 540 782 640 782 C720 786 770 812 792 852 L804 744 C722 750 668 722 670 680 C680 600 760 520 832 484 L812 448 C740 500 660 582 600 600 C552 590 546 450 534 270 Z"/>
<circle cx="505" cy="220" r="66"/><circle cx="872" cy="430" r="69"/><ellipse cx="240" cy="538" rx="68" ry="64"/><circle cx="845" cy="808" r="73"/>
</g>
<path d="M101.5 27.5 L107.5 33 L101.5 38.5" fill="none" stroke="#0b52a4" stroke-width="2.6"/>
</svg></div><div id="plus"></div>
<div class="nav" style="left:1397px"><svg width="28" height="28" viewBox="0 0 28 28" fill="none" stroke="#0d62b5" stroke-width="2.8" stroke-linejoin="miter"><path d="M3 14.5 L14 4.5 L25 14.5 M5.2 13 V25.6 H22.8 V13"/></svg><span>Home</span></div>
<div class="nav" style="left:1472px"><svg width="28" height="28" viewBox="0 0 28 28" fill="none" stroke="#0d62b5" stroke-width="2.4"><path d="M12 6.5 H17.5 M10 14.5 H17.5 M2.5 22.8 H17.5"/><path d="M19.5 6 L22 8.4 L26 4 M19.5 14 L22 16.4 L26 12" stroke-width="2.6"/><path d="M20.2 20.2 L25.2 25.4 M25.2 20.2 L20.2 25.4" stroke-width="2.8"/></svg><i class="abs" style="left:19.5px;top:7.2px;width:23px;height:23px;border-radius:50%;background:#f18d00;border:1.5px solid #fff;color:#fff;font:bold 13px/20px 'Liberation Sans',sans-serif;font-style:normal;text-align:center">8</i><span>Tasks</span></div>
<div class="nav" style="left:1547px"><svg width="28" height="28" viewBox="0 0 28 28" fill="none" stroke="#0d62b5" stroke-width="2.6"><rect x="3.3" y="6" width="21.4" height="19.6" rx="2"/><path d="M3.3 11.5 H24.7" stroke-width="3.4"/><path d="M8.3 3 V7 M19.7 3 V7" stroke-width="2.6"/><g fill="#0d62b5" stroke="none"><circle cx="9" cy="15.3" r="1.1"/><circle cx="14" cy="15.3" r="1.1"/><circle cx="19" cy="15.3" r="1.1"/><circle cx="9" cy="18.9" r="1.1"/><circle cx="14" cy="18.9" r="1.1"/><circle cx="19" cy="18.9" r="1.1"/><circle cx="9" cy="22.5" r="1.1"/><circle cx="14" cy="22.5" r="1.1"/><circle cx="19" cy="22.5" r="1.1"/></g></svg><span>Calendars</span></div>
<div class="nav" style="left:1622px"><svg width="28" height="28" viewBox="0 0 28 28" fill="none" stroke="#0d62b5" stroke-width="2.6"><rect x="3" y="7.5" width="22" height="17.8" rx="2.2"/><path d="M9.6 7.5 V4.2 H18.4 V7.5"/><path d="M3 17.5 H25" stroke-width="2.4"/><path d="M14 15.6 V19.6" stroke-width="2.6"/></svg><span>Cases</span></div>
<div class="nav" style="left:1697px"><svg width="28" height="28" viewBox="0 0 28 28" fill="none" stroke="#0d62b5" stroke-width="2.6" stroke-linejoin="round"><path d="M14 5.2 C20.6 5.2 25.6 9 25.6 14 C25.6 19 20.6 22.8 14 22.8 C12.4 22.8 10.9 22.6 9.5 22.2 C8 23.6 5.8 24.4 3.2 24.4 C4.8 22.8 5.4 21 5.1 19.4 C3.4 17.9 2.4 16 2.4 14 C2.4 9 7.4 5.2 14 5.2Z"/></svg><span>Messages</span></div>
<div class="nav" style="left:1772px"><svg width="28" height="28" viewBox="0 0 28 28" fill="none" stroke="#0d62b5" stroke-width="2.500" stroke-linejoin="round"><circle cx="10.300" cy="10.300" r="6.700"/><path d="M3.600 11.400 A6.700 6.700 0 0 1 11.200 3.700 C8.200 5.200 6.200 7.600 5.900 11 Z" fill="#0d62b5" stroke-width="1.200"/><path d="M7.400 5.600 C9.400 9.400 12.800 11.400 17 11.900" stroke-width="2"/><path d="M3.200 25.400 C3 21 6 19.200 10.200 19.200 C14.600 19.200 17.800 21 17.800 27.200 Z"/><path d="M4.800 22.800 C8.500 21.200 12.500 21.400 16.400 23.400" stroke-width="1.500"/><path d="M19.600 13.900 H27 M23.300 10.200 V17.600" stroke-width="2.700"/></svg><span>Invite</span></div>
<svg class="abs" style="left:1858px;top:7px" width="62" height="56" viewBox="1858 7 62 56">
<defs><filter id="b1a" x="-20%" y="-20%" width="140%" height="140%"><feGaussianBlur stdDeviation=".7"/></filter><clipPath id="av"><circle cx="1885.5" cy="34" r="24.5"/></clipPath>
<radialGradient id="avbg" cx=".8" cy=".35" r=".9"><stop offset="0" stop-color="#fbfcf6"/><stop offset=".6" stop-color="#eef1e2"/><stop offset="1" stop-color="#cdd9b4"/></radialGradient></defs>
<g clip-path="url(#av)">
<rect x="1858" y="7" width="62" height="56" fill="#f7f8f4"/>
<g filter="url(#b1a)">
<ellipse cx="1903" cy="36" rx="9" ry="7" fill="#dfe6a8"/>
<ellipse cx="1864" cy="42" rx="6" ry="8" fill="#e3e7b4"/>
<path d="M1876.4 50.6 L1899.2 46.7 L1904.4 61.0 L1873.1 61.0 Z" fill="#e4e2e2"/>
<path d="M1892.7 49.3 L1899.2 47.3 L1901.8 57.1 L1896.6 57.1 Z" fill="#a9abb5"/>
<ellipse cx="1880.600" cy="31.500" rx="11.600" ry="16.500" fill="#cf9b7e" transform="rotate(-17 1880.600 31.500)"/>
<path d="M1863.0 26.5 C1861.4 18.0 1867.9 11.5 1877.0 11.2 C1884.8 11.2 1888.8 16.1 1889.1 22.6 C1886.1 19.0 1881.6 17.4 1876.4 19.0 C1871.8 20.3 1868.6 23.9 1867.3 29.1 C1866.6 31.0 1866.3 32.3 1866.0 33.6 Z" fill="#5b3d25"/>
<path d="M1872.1 38.9 C1875.1 46.7 1879.6 50.6 1885.5 49.3 C1889.4 47.3 1892.0 42.1 1891.7 35.6 C1889.4 40.2 1886.1 42.4 1882.2 43.1 C1878.3 43.4 1874.4 41.5 1872.1 38.9Z" fill="#6e4a30"/>
<path d="M1878.0 40.5 C1880.9 42.4 1884.8 42.1 1887.4 38.5 C1884.8 40.2 1880.9 40.9 1878.0 40.5Z" fill="#f1e8e0"/>
<path d="M1874.1 28.8 l2.200 -.900 M1882.2 26.5 l2.600 -.900" stroke="#3a2a1e" stroke-width="1.300"/>
<path d="M1867.3 41.5 C1871.8 40.2 1877.0 44.1 1877.7 50.6 L1875.7 58.4 L1868.6 57.1 C1866.6 51.9 1866.3 46.7 1867.3 41.5Z" fill="#dcab92"/>
<path d="M1866.3 32.3 L1868.9 32.0 L1870.8 40.5 L1867.9 41.5 Z" fill="#3c5a48"/>
</g></g>
<circle cx="1907" cy="48" r="7.2" fill="#97c11f" stroke="#fff" stroke-width="2.6"/>
</svg>
</div>
<!--SCROLL-->
<div id="sb"><i></i><svg class="abs" style="left:0;top:0" width="21" height="966" viewBox="0 0 21 966"><path d="M5.800 14 L10.500 8.600 L15.200 14 Z" fill="#a3a3a3"/><path d="M5.800 952.400 L10.500 957.800 L15.200 952.400 Z" fill="#505050"/></svg></div>
<!--BOTTOM-->
<div id="bot">
<svg class="abs" style="left:11px;top:11px" width="17" height="16" viewBox="0 0 17 16" fill="none" stroke="#a3a3a3" stroke-width="1.400" stroke-linejoin="round"><path d="M2.200 7.200 L8.400 1.400 L14.600 7.200 V14.200 H2.200 Z"/></svg>
<div class="abs" style="left:32.500px;top:10px;font-size:15px;line-height:20px;color:#8e8e8e;white-space:nowrap" id="bt1">Home</div>
<div class="abs" style="left:86px;top:1px;width:142px;height:44px;background:#fff;border-left:1px solid #dcdcdc;border-right:1px solid #dcdcdc;border-bottom:6px solid #00a0e6"></div>
<svg class="abs" style="left:98px;top:12.500px" width="15" height="13" viewBox="0 0 15 13" fill="none" stroke="#787878" stroke-width="1.200"><rect x=".8" y=".8" width="13.400" height="11" rx="1"/><path d="M14.200 3.600 H8 L6.600 .8"/></svg>
<div class="abs" style="left:118.500px;top:10px;font-size:15px;line-height:20px;color:#555;white-space:nowrap" id="bt2">Restaurant</div>
<div class="abs" style="left:201px;top:10px;width:16px;font:16.500px/20px 'DejaVu Sans',sans-serif;color:#4a4a4a;text-align:center">✖</div>
</div>
<!--MODAL-->
<div id="modal">
<div class="abs" style="left:37px;top:18px;font-size:18.500px;line-height:26px;color:#0a66b8;-webkit-text-stroke:.55px #0a66b8;letter-spacing:.2px;white-space:nowrap" id="mtitle">Build Application</div>
<svg class="abs" style="left:789px;top:15px" width="14" height="14" viewBox="0 0 14 14" stroke="#0b62b5" stroke-width="3.200" stroke-linecap="round"><path d="M2 2 L12 12 M12 2 L2 12"/></svg>
<div class="abs" style="left:37px;top:61px;width:743px;height:1px;background:#d5d9da"></div>
<div class="abs mt" style="left:37px;top:81px;letter-spacing:.19px" id="t1">Select one of the following options:</div>
<div class="abs" style="left:37px;top:112px;width:379px;height:52px;border:1px solid #c6c6c6"></div>
<div class="abs mt" style="left:51px;top:129px;color:#666;letter-spacing:-.17px" id="t2">Distribute by QR</div>
<div class="abs" style="left:36px;top:172px;width:383px;height:59px;border:4px solid #f08c00;border-radius:10px;background:#dff1fb;box-shadow:0 1px 1px rgba(0,0,0,.35)"></div>
<div class="abs mt" style="left:51px;top:191px;color:#585858;-webkit-text-stroke:.5px #585858" id="t3">Distribute by Store</div>
<div class="abs mt" style="left:37px;top:256px;letter-spacing:.13px" id="t4">Select the operating system:</div>
<div class="abs mt" style="left:114px;top:304px;color:#c6c8cc" id="t5">Android</div>
<svg class="abs" style="left:186px;top:293px" width="36" height="40" viewBox="727 530 36 40" fill="#c4c5c7"><path d="M734 542.600 C734 537 738.500 533.600 744.500 533.600 C750.500 533.600 755 537 755 542.600 Z"/><path d="M734 543.900 H755 V560 Q755 562.200 752.800 562.200 H736.200 Q734 562.200 734 560 Z"/><rect x="728" y="543.600" width="4.800" height="14.400" rx="2.400"/><rect x="756.200" y="543.600" width="4.800" height="14.400" rx="2.400"/><rect x="737.800" y="558" width="5.200" height="11.600" rx="2.400"/><rect x="746.100" y="558" width="5.200" height="11.600" rx="2.400"/><path d="M738.600 531.400 L740.600 535 M750.400 531.400 L748.400 535" stroke="#c4c5c7" stroke-width=".9" stroke-linecap="round"/><circle cx="739.800" cy="538.600" r=".9" fill="#fff"/><circle cx="749.200" cy="538.600" r=".9" fill="#fff"/></svg>
<div class="abs" style="left:236px;top:289px;width:1px;height:50px;background:#c8c8c8"></div>
<div class="abs" style="left:239px;top:284px;width:113px;height:62px;border:4px solid #f08c00;border-radius:11px;background:#fff;box-shadow:0 1px 1px rgba(0,0,0,.3)"></div>
<svg class="abs" style="left:253px;top:294px" width="32" height="39" viewBox="0 0 32 39" fill="#0568b8"><path d="M22.300 0 C22.600 2.300 21.700 4.500 20.400 6.100 C19 7.800 16.800 9 14.800 8.900 C14.500 6.700 15.500 4.500 16.800 3.100 C18.200 1.400 20.500 .2 22.300 0 Z"/><path d="M30.200 13.600 C29.700 13.900 26.200 15.900 26.200 20.300 C26.300 25.500 30.800 27.300 31 27.400 C30.900 27.600 30.200 30 28.500 32.500 C27 34.700 25.400 36.900 23 36.900 C20.600 37 19.900 35.500 17.100 35.500 C14.400 35.500 13.500 36.900 11.300 37 C8.900 37.100 7.100 34.600 5.600 32.500 C2.500 28 .1 19.800 3.300 14.300 C4.900 11.500 7.700 9.800 10.800 9.700 C13.100 9.700 15.300 11.300 16.700 11.300 C18.100 11.300 20.800 9.400 23.600 9.700 C24.800 9.700 28.100 10.100 30.200 13.600 Z"/></svg>
<div class="abs mt" style="left:301px;top:304px;color:#1a66b0;letter-spacing:-1px" id="t6">iOS</div>
<svg class="abs" style="left:36px;top:403px" width="22" height="22" viewBox="0 0 22 22" fill="none" stroke="#11b4ea" stroke-width="2"><circle cx="11" cy="11.200" r="9.200"/><path d="M11 9.800 V15.800" stroke-width="2.200"/><circle cx="11" cy="6.800" r="1.300" fill="#11b4ea" stroke="none"/></svg>
<div class="abs" style="left:70px;top:396px;font-size:15px;line-height:18px;color:#13b2e8;white-space:nowrap" id="t7">For iOS it is strict to comply with the requirements<br><span style="letter-spacing:.075px">in the signature section of the application</span></div>
<div class="abs" style="left:651px;top:557px;width:129px;height:37px;border-radius:6px;background:#0568b5;color:#fff;font-size:16px;font-weight:bold;line-height:37px;text-align:center" id="bbtn"><span id="t8" style="font-weight:normal;-webkit-text-stroke:.45px #fff">Build</span></div>
<svg class="abs" style="left:469px;top:123px" width="340" height="320" viewBox="0 0 1148 1080" fill="none" stroke="#76cdf3" stroke-width="9.200" stroke-linejoin="round" stroke-linecap="round">
<!-- small right squares (behind phone) -->
<rect x="938" y="380" width="104" height="104" rx="24"/><rect x="964" y="406" width="52" height="52" rx="10"/>
<rect x="938" y="520" width="104" height="104" rx="24"/><rect x="964" y="546" width="52" height="52" rx="10"/>
<rect x="796" y="520" width="104" height="104" rx="24"/><rect x="822" y="546" width="52" height="52" rx="10"/>
<!-- phone -->
<g transform="translate(663 483) rotate(29.5)">
<rect x="-207" y="-374" width="414" height="748" rx="58" fill="#fff"/>
<path d="M-127 -352 H-30 C-8 -352 -16 -322 6 -322 C22 -322 26 -336 42 -340 C56 -344 62 -352 72 -352 H150 C172 -352 185 -338 185 -316 V316 C185 338 172 352 150 352 H-150 C-172 352 -185 338 -185 316 V-316 C-185 -338 -172 -352 -150 -352 Z"/>
</g>
<rect x="399" y="655" width="42" height="42" rx="4" transform="rotate(27 420 676)"/>
<circle cx="515" cy="733" r="21"/>
<path d="M592 776 H638 L615 817 Z"/>
<!-- gear -->
<path d="M495.6 189.7 L497.8 160.9 L526.2 160.9 L528.4 189.7 L555.8 201.0 L577.7 182.2 L597.8 202.3 L579.0 224.2 L590.3 251.6 L619.1 253.8 L619.1 282.2 L590.3 284.4 L579.0 311.8 L597.8 333.7 L577.7 353.8 L555.8 335.0 L528.4 346.3 L526.2 375.1 L497.8 375.1 L495.6 346.3 L468.2 335.0 L446.3 353.8 L426.2 333.7 L445.0 311.8 L433.7 284.4 L404.9 282.2 L404.9 253.8 L433.7 251.6 L445.0 224.2 L426.2 202.3 L446.3 182.2 L468.2 201.0Z" fill="#fff"/>
<circle cx="512" cy="268" r="43"/><circle cx="512" cy="268" r="33"/>
<!-- donut -->
<circle cx="248" cy="590" r="152" fill="#fff"/><circle cx="248" cy="590" r="99"/><circle cx="248" cy="590" r="88"/>
<path d="M276 441 L265 492 M347 478 L318 514 M347 602 H400 M246 690 L244 741 M163 642 L118 668"/>
<!-- disc -->
<path d="M366 545 C372 510 470 470 598 462 L640 462 L600 512 L628 532 L640 514 L656 548 C640 580 520 622 392 626 L380 600 Z" fill="#fff"/>
<path d="M366 545 C380 560 520 540 612 500"/>
<!-- letter A -->
<path d="M676 398 L722 410 L738 556 L690 545 L686 520 L650 510 L636 530 L588 516 Z" fill="#fff"/>
<path d="M688 436 L660 484 L692 492 Z"/>
<!-- star -->
<path d="M324.6 831.2 L333.5 885.4 L384.0 907.1 L335.2 932.4 L330.0 987.1 L291.0 948.5 L237.4 960.5 L262.0 911.4 L234.0 864.1 L288.3 872.4Z"/>
<!-- deco -->
<g stroke-width="6.500"><circle cx="208" cy="112" r="31"/><circle cx="262" cy="272" r="14"/><circle cx="980" cy="943" r="31"/><circle cx="927" cy="785" r="14"/>
<path d="M295.6 76.5 L328.4 99.5 M323.5 71.6 L300.5 104.4 M863.6 956.5 L896.4 979.5 M891.5 951.6 L868.5 984.4 "/>
<path d="M143.0 178.0 L173.0 178.0 M147.4 167.4 L168.6 188.6 M158.0 163.0 L158.0 193.0 M168.6 167.4 L147.4 188.6 M1017.0 880.0 L1047.0 880.0 M1021.4 869.4 L1042.6 890.6 M1032.0 865.0 L1032.0 895.0 M1042.6 869.4 L1021.4 890.6 "/>
<path d="M250.7 184.4 L264.2 180.8 M243.6 196.7 L247.2 210.2 M231.3 189.6 L217.8 193.2 M238.4 177.3 L234.8 163.8 M957.7 865.4 L971.2 861.8 M950.6 877.7 L954.2 891.2 M938.3 870.6 L924.8 874.2 M945.4 858.3 L941.8 844.8 "/></g>
</svg>
</div>
</body>
</html>
